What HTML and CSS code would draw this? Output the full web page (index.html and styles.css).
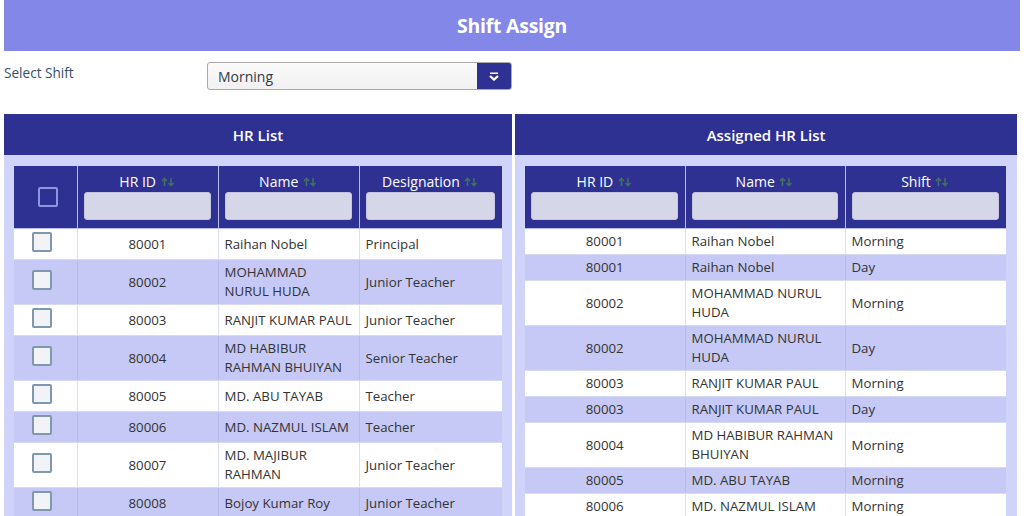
FILE: index.html
```html
<!DOCTYPE html>
<html>
<head>
<meta charset="utf-8">
<title>Shift Assign</title>
<link rel="stylesheet" href="styles.css">
</head>
<body>
<div class="page">
  <header class="title-bar">Shift Assign</header>

  <div class="shift-row">
    <label class="shift-label">Select Shift</label>
    <div class="select">
      <span class="select-value">Morning</span>
      <span class="select-btn">
        <svg width="12" height="11" viewBox="0 0 12 11"><path d="M2 2.2H10" stroke="#fff" stroke-width="1.6" fill="none"/><path d="M2 5L6 8.6L10 5" stroke="#fff" stroke-width="2.2" fill="none" stroke-linejoin="round"/></svg>
      </span>
    </div>
  </div>

  <div class="panels">
    <section class="panel panel-left">
      <h2 class="panel-title">HR List</h2>
      <div class="panel-body">
        <table class="grid grid-left">
          <colgroup><col class="c-chk"><col class="c-id"><col class="c-name"><col class="c-desig"></colgroup>
          <thead>
            <tr>
              <th class="th-chk"><span class="chk chk-head"></span></th>
              <th><div class="th-label">HR ID <span class="sort"><svg width="14" height="10" viewBox="0 0 14 10"><path d="M3.5 9V1.5M1 4L3.5 1.5L6 4" stroke="#416f60" stroke-width="1.6" fill="none"/><path d="M10 1V8.5M7.5 6L10 8.5L12.5 6" stroke="#416f60" stroke-width="1.6" fill="none"/></svg></span></div><div class="filter"></div></th>
              <th><div class="th-label">Name <span class="sort"><svg width="14" height="10" viewBox="0 0 14 10"><path d="M3.5 9V1.5M1 4L3.5 1.5L6 4" stroke="#416f60" stroke-width="1.6" fill="none"/><path d="M10 1V8.5M7.5 6L10 8.5L12.5 6" stroke="#416f60" stroke-width="1.6" fill="none"/></svg></span></div><div class="filter"></div></th>
              <th><div class="th-label">Designation <span class="sort"><svg width="14" height="10" viewBox="0 0 14 10"><path d="M3.5 9V1.5M1 4L3.5 1.5L6 4" stroke="#416f60" stroke-width="1.6" fill="none"/><path d="M10 1V8.5M7.5 6L10 8.5L12.5 6" stroke="#416f60" stroke-width="1.6" fill="none"/></svg></span></div><div class="filter"></div></th>
            </tr>
          </thead>
          <tbody>
            <tr><td class="td-chk"><span class="chk"></span></td><td class="td-id">80001</td><td>Raihan Nobel</td><td>Principal</td></tr>
            <tr><td class="td-chk"><span class="chk"></span></td><td class="td-id">80002</td><td>MOHAMMAD NURUL HUDA</td><td>Junior Teacher</td></tr>
            <tr><td class="td-chk"><span class="chk"></span></td><td class="td-id">80003</td><td>RANJIT KUMAR PAUL</td><td>Junior Teacher</td></tr>
            <tr><td class="td-chk"><span class="chk"></span></td><td class="td-id">80004</td><td>MD HABIBUR RAHMAN BHUIYAN</td><td>Senior Teacher</td></tr>
            <tr><td class="td-chk"><span class="chk"></span></td><td class="td-id">80005</td><td>MD. ABU TAYAB</td><td>Teacher</td></tr>
            <tr><td class="td-chk"><span class="chk"></span></td><td class="td-id">80006</td><td>MD. NAZMUL ISLAM</td><td>Teacher</td></tr>
            <tr><td class="td-chk"><span class="chk"></span></td><td class="td-id">80007</td><td>MD. MAJIBUR RAHMAN</td><td>Junior Teacher</td></tr>
            <tr><td class="td-chk"><span class="chk"></span></td><td class="td-id">80008</td><td>Bojoy Kumar Roy</td><td>Junior Teacher</td></tr>
          </tbody>
        </table>
      </div>
    </section>

    <section class="panel panel-right">
      <h2 class="panel-title">Assigned HR List</h2>
      <div class="panel-body">
        <table class="grid grid-right">
          <colgroup><col class="r-id"><col class="r-name"><col class="r-shift"></colgroup>
          <thead>
            <tr>
              <th><div class="th-label">HR ID <span class="sort"><svg width="14" height="10" viewBox="0 0 14 10"><path d="M3.5 9V1.5M1 4L3.5 1.5L6 4" stroke="#416f60" stroke-width="1.6" fill="none"/><path d="M10 1V8.5M7.5 6L10 8.5L12.5 6" stroke="#416f60" stroke-width="1.6" fill="none"/></svg></span></div><div class="filter"></div></th>
              <th><div class="th-label">Name <span class="sort"><svg width="14" height="10" viewBox="0 0 14 10"><path d="M3.5 9V1.5M1 4L3.5 1.5L6 4" stroke="#416f60" stroke-width="1.6" fill="none"/><path d="M10 1V8.5M7.5 6L10 8.5L12.5 6" stroke="#416f60" stroke-width="1.6" fill="none"/></svg></span></div><div class="filter"></div></th>
              <th><div class="th-label">Shift <span class="sort"><svg width="14" height="10" viewBox="0 0 14 10"><path d="M3.5 9V1.5M1 4L3.5 1.5L6 4" stroke="#416f60" stroke-width="1.6" fill="none"/><path d="M10 1V8.5M7.5 6L10 8.5L12.5 6" stroke="#416f60" stroke-width="1.6" fill="none"/></svg></span></div><div class="filter"></div></th>
            </tr>
          </thead>
          <tbody>
            <tr><td class="td-id">80001</td><td>Raihan Nobel</td><td>Morning</td></tr>
            <tr><td class="td-id">80001</td><td>Raihan Nobel</td><td>Day</td></tr>
            <tr><td class="td-id">80002</td><td>MOHAMMAD NURUL HUDA</td><td>Morning</td></tr>
            <tr><td class="td-id">80002</td><td>MOHAMMAD NURUL HUDA</td><td>Day</td></tr>
            <tr><td class="td-id">80003</td><td>RANJIT KUMAR PAUL</td><td>Morning</td></tr>
            <tr><td class="td-id">80003</td><td>RANJIT KUMAR PAUL</td><td>Day</td></tr>
            <tr><td class="td-id">80004</td><td>MD HABIBUR RAHMAN BHUIYAN</td><td>Morning</td></tr>
            <tr><td class="td-id">80005</td><td>MD. ABU TAYAB</td><td>Morning</td></tr>
            <tr><td class="td-id">80006</td><td>MD. NAZMUL ISLAM</td><td>Morning</td></tr>
          </tbody>
        </table>
      </div>
    </section>
  </div>
</div>
</body>
</html>
```

FILE: styles.css
```css
* { box-sizing: border-box; }
html, body { margin: 0; padding: 0; background: #fff; }
body {
  font-family: "Open Sans", "Noto Sans", sans-serif;
  color: #333;
  overflow: hidden;
}
.page {
  padding: 0 6px 0 4px;
}
.title-bar {
  height: 51px;
  background: #8387e8;
  color: #fff;
  font-size: 19.4px;
  font-weight: 700;
  display: flex;
  align-items: center;
  justify-content: center;
  letter-spacing: -0.2px;
}
.shift-row {
  display: flex;
  align-items: flex-start;
  margin-top: 11px;
  height: 28px;
}
.shift-label {
  width: 203px;
  font-size: 13.6px;
  color: #34506c;
  padding-top: 1px;
}
.select {
  width: 305px;
  height: 28px;
  border: 1px solid #a9a9a9;
  border-radius: 3px;
  background: linear-gradient(#fafafa, #f1f1f1);
  display: flex;
  align-items: center;
  overflow: hidden;
}
.select-value {
  flex: 1;
  padding-left: 10px;
  font-size: 14px;
  color: #2d3b4c;
}
.select-btn {
  width: 34px;
  height: 100%;
  background: #2e3192;
  display: flex;
  align-items: center;
  justify-content: center;
}
.select-btn svg { display: block; }

.panels {
  display: flex;
  gap: 3px;
  margin-top: 24px;
}
.panel-left { flex: 0 0 508px; }
.panel-right { flex: 0 0 502px; }
.panel-title {
  margin: 0;
  height: 41px;
  background: #2e3192;
  color: #fff;
  font-size: 15px;
  font-weight: 600;
  display: flex;
  align-items: center;
  justify-content: center;
}
.panel-body {
  background: #d0d3fa;
  padding: 11px 10px 40px;
  height: 400px;
}
.panel-right .panel-body { padding-right: 11px; }

.grid {
  width: 100%;
  border-collapse: collapse;
  table-layout: fixed;
  font-size: 13.25px;
}
.c-chk { width: 63px; }
.c-id { width: 141px; }
.c-name { width: 141px; }
.c-desig { width: 143px; }
.r-id { width: 160px; }
.r-name { width: 160px; }
.r-shift { width: 161px; }

.grid th {
  background: #2e3192;
  color: #fff;
  font-weight: 400;
  font-size: 14px;
  padding: 6px 7px 8px 6px;
  border-left: 1px solid #b9bdee;
  border-bottom: 1px solid #b9bdee;
  vertical-align: top;
}
.grid th:first-child { border-left: none; }
.th-label {
  height: 20px;
  line-height: 20px;
  text-align: center;
  white-space: nowrap;
}
.sort { display: inline-block; vertical-align: 0px; margin-left: 1px; }
.sort svg { display: block; }
.filter {
  height: 28px;
  background: #d5d7e9;
  border: 1px solid #c3c6dd;
  border-radius: 3px;
}
.th-chk { vertical-align: middle !important; padding-left: 24px !important; padding-right: 0 !important; }
.chk {
  display: block;
  width: 20px;
  height: 20px;
  margin: 0 0 4px 18px;
  border: 2px solid #7f98ae;
  border-radius: 2px;
  background: #f1f3f7;
}
.chk-head {
  margin: 2px 0 0 0;
  border-color: #8c97e2;
  background: transparent;
}
.grid td {
  padding: 3px 6px;
  line-height: 19px;
  border-left: 1px solid #dcdff2;
  border-bottom: 1px solid #d6d9f2;
  vertical-align: middle;
  color: #333;
}
.grid td:first-child { border-left: none; }
.grid tbody tr:nth-child(odd) td { background: #fff; }
.grid tbody tr:nth-child(even) td { background: #c6c9f5; border-left-color: #b8bceb; }
.td-id { text-align: center; }
.td-chk { padding: 3px 0 !important; }
```
